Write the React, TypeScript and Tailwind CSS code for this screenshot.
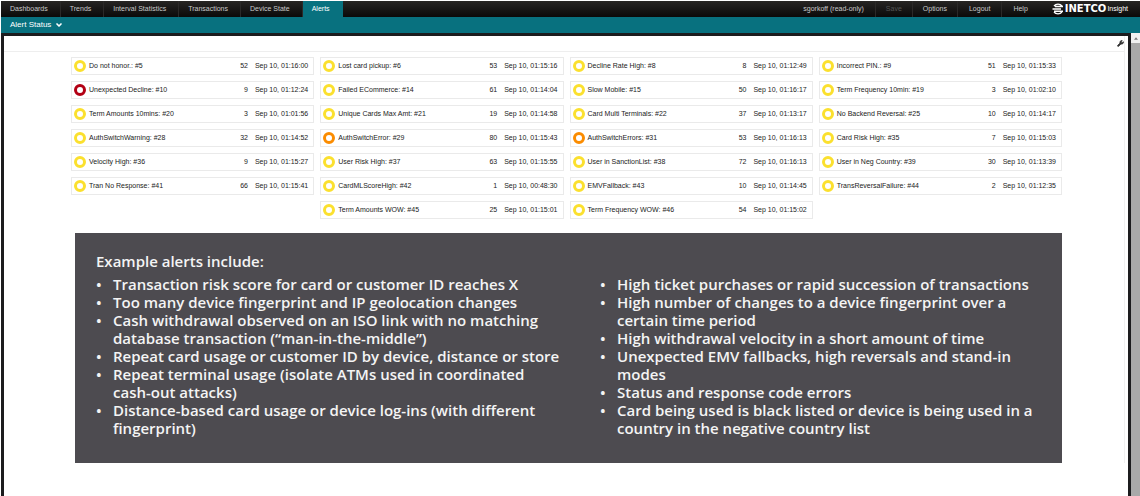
import { ChevronDown, Wrench } from "lucide-react";
import clsx from "clsx";

type Level = "low" | "medium" | "high";

interface Alert {
    name: string;
    count: number;
    time: string;
    level?: Level;
    start?: boolean;
}

const navItems = ["Dashboards", "Trends", "Interval Statistics", "Transactions", "Device State", "Alerts"];

const alerts: Alert[] = [
    { name: "Do not honor.: #5", count: 52, time: "01:16:00" },
    { name: "Lost card pickup: #6", count: 53, time: "01:15:16" },
    { name: "Decline Rate High: #8", count: 8, time: "01:12:49" },
    { name: "Incorrect PIN.: #9", count: 51, time: "01:15:33" },
    { name: "Unexpected Decline: #10", count: 9, time: "01:12:24", level: "high" },
    { name: "Failed ECommerce: #14", count: 61, time: "01:14:04" },
    { name: "Slow Mobile: #15", count: 50, time: "01:16:17" },
    { name: "Term Frequency 10min: #19", count: 3, time: "01:02:10" },
    { name: "Term Amounts 10mins: #20", count: 3, time: "01:01:56" },
    { name: "Unique Cards Max Amt: #21", count: 19, time: "01:14:58" },
    { name: "Card Multi Terminals: #22", count: 37, time: "01:13:17" },
    { name: "No Backend Reversal: #25", count: 10, time: "01:14:17" },
    { name: "AuthSwitchWarning: #28", count: 32, time: "01:14:52" },
    { name: "AuthSwitchError: #29", count: 80, time: "01:15:43", level: "medium" },
    { name: "AuthSwitchErrors: #31", count: 53, time: "01:16:13", level: "medium" },
    { name: "Card Risk High: #35", count: 7, time: "01:15:03" },
    { name: "Velocity High: #36", count: 9, time: "01:15:27" },
    { name: "User Risk High: #37", count: 63, time: "01:15:55" },
    { name: "User in SanctionList: #38", count: 72, time: "01:16:13" },
    { name: "User in Neg Country: #39", count: 30, time: "01:13:39" },
    { name: "Tran No Response: #41", count: 66, time: "01:15:41" },
    { name: "CardMLScoreHigh: #42", count: 1, time: "00:48:30" },
    { name: "EMVFallback: #43", count: 10, time: "01:14:45" },
    { name: "TransReversalFailure: #44", count: 2, time: "01:12:35" },
    // last row is centred under the two middle columns
    { name: "Term Amounts WOW: #45", count: 25, time: "01:15:01", start: true },
    { name: "Term Frequency WOW: #46", count: 54, time: "01:15:02" },
];

const leftExamples = [
    "Transaction risk score for card or customer ID reaches X",
    "Too many device fingerprint and IP geolocation changes",
    "Cash withdrawal observed on an ISO link with no matching database transaction (“man-in-the-middle”)",
    "Repeat card usage or customer ID by device, distance or store",
    "Repeat terminal usage (isolate ATMs used in coordinated cash-out attacks)",
    "Distance-based card usage or device log-ins (with different fingerprint)",
];

const rightExamples = [
    "High ticket purchases or rapid succession of transactions",
    "High number of changes to a device fingerprint over a certain time period",
    "High withdrawal velocity in a short amount of time",
    "Unexpected EMV fallbacks, high reversals and stand-in modes",
    "Status and response code errors",
    "Card being used is black listed or device is being used in a country in the negative country list",
];

const ringColors: Record<Level, string> = {
    low: "border-[#fbe02e]",
    medium: "border-[#fb8c00]",
    high: "border-[#b30014]",
};

function Logo() {
    return (
        <div className="flex items-center gap-px pr-3 pl-[13px] text-white">
            <svg viewBox="0 0 24 24" className="size-3" fill="none" stroke="currentColor" strokeWidth="2.6">
                <path d="M4 6C8 1 16 1 20 6M6 7H22M1 12H18M4 16.500H22M4 18C8 23 16 23 20 18" />
            </svg>
            <span className="font-['DejaVu_Sans',sans-serif] text-[10px] font-bold">INETCO</span>
            <span className="text-[7px]">Insight</span>
        </div>
    );
}

function TopBar() {
    return (
        <header className="flex h-4 justify-between bg-linear-to-b from-[#272523] to-[#0b0a0a] text-[7px] leading-4 text-[#c9c9c9]">
            <nav className="flex">
                {navItems.map((item) => (
                    <a
                        key={item}
                        href="#"
                        className={clsx(
                            "border-r pr-3 pl-[9px] whitespace-nowrap",
                            item === "Alerts" ? "border-[#08717f] bg-[#08717f] text-white" : "border-[#2b2928]"
                        )}
                    >
                        {item}
                    </a>
                ))}
            </nav>
            <div className="flex">
                <span className="border-r border-[#2b2928] px-[11px] whitespace-nowrap">sgorkoff (read-only)</span>
                <button disabled className="border-r border-[#2b2928] px-[10px] text-[#555]">Save</button>
                <button className="border-r border-[#2b2928] px-[10px]">Options</button>
                <button className="border-r border-[#2b2928] px-[11px]">Logout</button>
                <button className="px-[11px]">Help</button>
                <Logo />
            </div>
        </header>
    );
}

function AlertCard({ alert }: { alert: Alert }) {
    return (
        <li
            className={clsx(
                "flex h-[18px] items-center border border-[#eaeaea] pl-[2px] pr-[5px] text-[7px] whitespace-nowrap text-[#222]",
                alert.start && "col-start-2"
            )}
        >
            <span className={clsx("mr-[3px] size-3 shrink-0 rounded-full border-3", ringColors[alert.level ?? "low"])} />
            <span className="flex-1">{alert.name}</span>
            <span className="mr-[7px]">{alert.count}</span>
            <span>Sep 10, {alert.time}</span>
        </li>
    );
}

function ExampleList({ items }: { items: string[] }) {
    return (
        <ul className="pr-2">
            {items.map((item) => (
                <li key={item} className="flex">
                    <span className="w-[17px] shrink-0">•</span>
                    <span>{item}</span>
                </li>
            ))}
        </ul>
    );
}

export default function App() {
    return (
        <div className="flex min-h-screen flex-col bg-white pt-px pl-px font-['Liberation_Sans',Arial,sans-serif]">
            <TopBar />
            <div className="flex h-4 items-center bg-[#08717f] pl-[9px] text-white">
                <button className="flex items-center gap-1 text-[8px]">
                    Alert Status
                    <ChevronDown className="size-2" strokeWidth={5} />
                </button>
            </div>

            <div className="flex flex-1">
                <main className="flex-1 border-t-3 border-r-3 border-l-3 border-[#1c1c1e] pr-[3px]">
                    <div className="border-r border-[#f0f0f0]">
                        <div className="flex h-4 items-center justify-end border-b border-[#eee]">
                            <button aria-label="Settings">
                                <Wrench className="size-[7px] text-[#333]" fill="currentColor" strokeWidth={3} />
                            </button>
                        </div>

                        <ul className="grid grid-cols-4 gap-[6px] pt-[5px] pr-[62px] pl-[67px]">
                            {alerts.map((alert) => (
                                <AlertCard key={alert.name} alert={alert} />
                            ))}
                        </ul>

                        <section className="mt-[14px] mr-[62px] mb-8 ml-[71px] bg-[#4d4b50] pt-[19px] pr-[10px] pb-[26px] pl-[21px] font-['Open_Sans',sans-serif] text-[15px] leading-[18px] font-semibold text-[#f4f4f4]">
                            <h2 className="mb-[5px]">Example alerts include:</h2>
                            <div className="grid grid-cols-[475fr_452fr] gap-[29px]">
                                <ExampleList items={leftExamples} />
                                <ExampleList items={rightExamples} />
                            </div>
                        </section>
                    </div>
                </main>
                <div className="w-[9px] bg-[#a9a9a9]">
                    <div className="flex h-[10px] items-center justify-center bg-[#f1f1f1]">
                        <svg viewBox="0 0 6 4" className="h-[3px] w-1" fill="#777">
                            <path d="M0 4L3 0L6 4Z" />
                        </svg>
                    </div>
                </div>
            </div>
        </div>
    );
}
